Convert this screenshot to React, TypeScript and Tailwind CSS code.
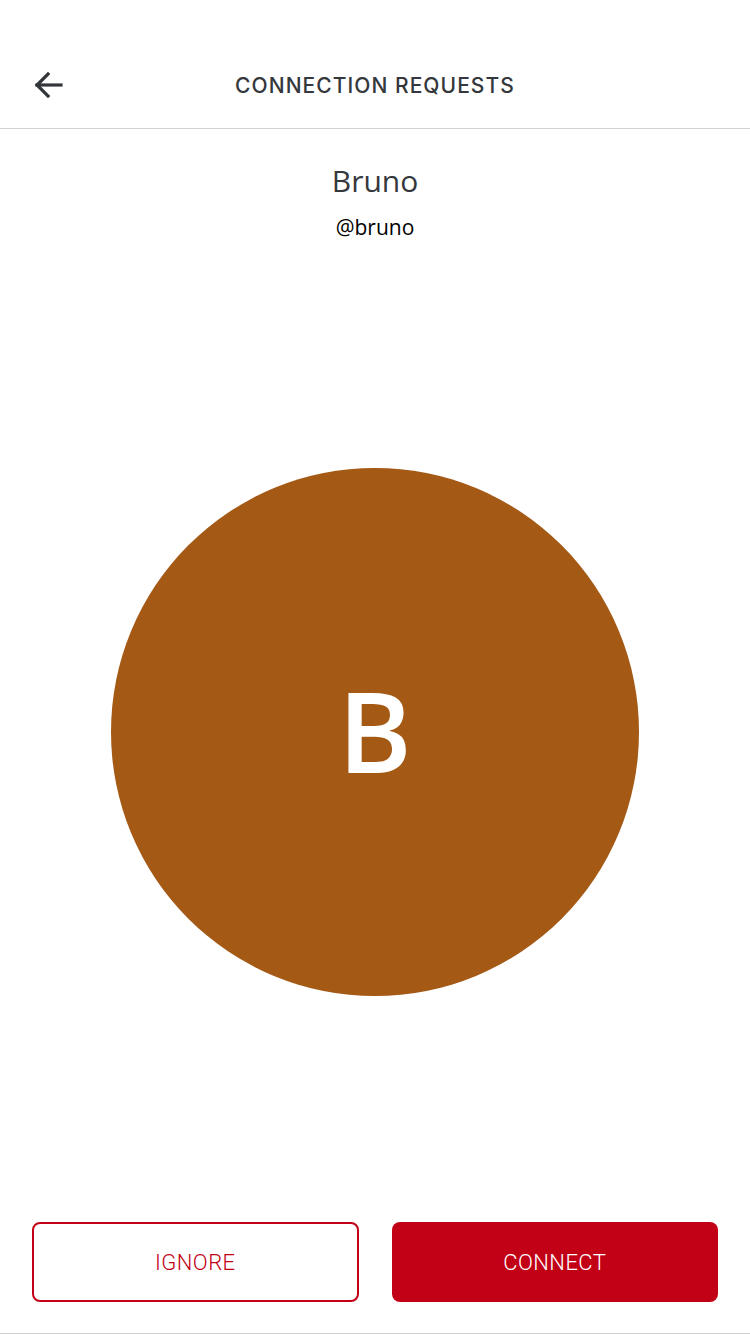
function BackArrow() {
  return (
    <svg width="30" height="30" viewBox="0 0 30 30" fill="none" stroke="currentColor" strokeWidth="3.2" strokeLinecap="square" strokeLinejoin="miter">
      <path d="M4 15 H28" />
      <path d="M15 4 L4 15 L15 26" />
    </svg>
  )
}

export default function App() {
  return (
    <div
      className="flex h-[1334px] w-[750px] flex-col bg-white"
      style={{ fontFamily: 'Roboto, "Liberation Sans", sans-serif' }}
    >
      {/* header */}
      <div className="relative flex h-[129px] shrink-0 items-center justify-center border-b border-[#d0d2d4]">
        <button className="absolute left-[33px] top-[70px] text-[#33373b]">
          <BackArrow />
        </button>
        <h1
          className="pt-[44px] text-[21px] font-medium tracking-[0.05em] text-[#34373b]"
          style={{ fontFamily: 'Inter, "Open Sans", sans-serif' }}
        >
          CONNECTION REQUESTS
        </h1>
      </div>

      {/* name */}
      <div className="flex flex-col items-center pt-[34px]">
        <div
          className="text-[30px] leading-[36px] text-[#35383c]"
          style={{ fontFamily: '"Open Sans", sans-serif' }}
        >
          Bruno
        </div>
        <div
          className="mt-[14px] text-[21px] font-medium leading-[28px] text-black"
          style={{ fontFamily: '"Open Sans", sans-serif' }}
        >
          @bruno
        </div>
      </div>

      {/* avatar */}
      <div className="flex flex-1 items-center justify-center">
        <div className="flex h-[528px] w-[528px] items-center justify-center rounded-full bg-[#a45915]">
          <span
            className="-mt-[4px] text-[112px] font-semibold leading-none text-white"
            style={{ fontFamily: '"Open Sans", sans-serif' }}
          >
            B
          </span>
        </div>
      </div>

      {/* actions */}
      <div className="grid grid-cols-2 gap-[33px] border-b border-[#cfcfcf] px-[32px] pb-[31px]">
        <button className="h-[80px] rounded-[8px] border-2 border-[#c20016] text-[22px] font-light tracking-[0.02em] text-[#c20016]">
          IGNORE
        </button>
        <button className="h-[80px] rounded-[8px] bg-[#c20016] text-[22px] font-light tracking-[0.02em] text-white">
          CONNECT
        </button>
      </div>
    </div>
  )
}
